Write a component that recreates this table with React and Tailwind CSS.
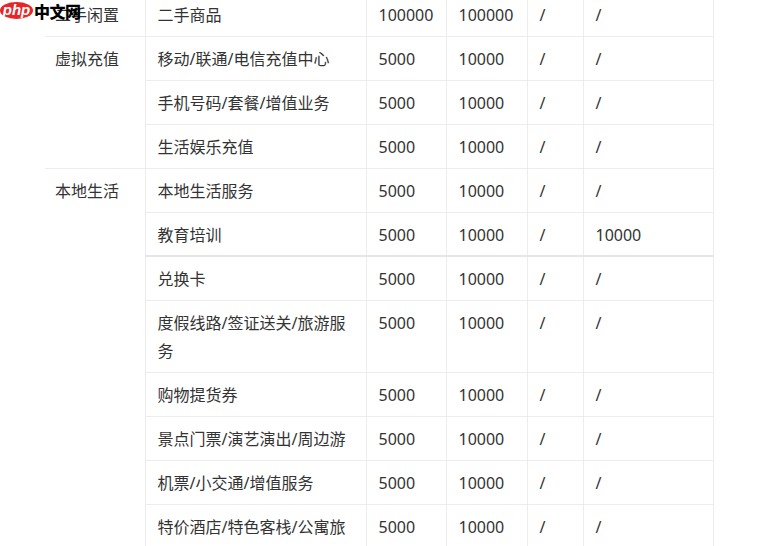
import React from "react";

const font = { fontFamily: '"Noto Sans", "Noto Sans CJK SC", sans-serif' };

const rows = [
  { group: "二手闲置", span: 1, name: "二手商品", a: "100000", b: "100000", c: "/", d: "/" },
  { group: "虚拟充值", span: 3, name: "移动/联通/电信充值中心", a: "5000", b: "10000", c: "/", d: "/" },
  { name: "手机号码/套餐/增值业务", a: "5000", b: "10000", c: "/", d: "/" },
  { name: "生活娱乐充值", a: "5000", b: "10000", c: "/", d: "/" },
  { group: "本地生活", span: 8, name: "本地生活服务", a: "5000", b: "10000", c: "/", d: "/" },
  { name: "教育培训", a: "5000", b: "10000", c: "/", d: "10000", thick: true },
  { name: "兑换卡", a: "5000", b: "10000", c: "/", d: "/" },
  { name: "度假线路/签证送关/旅游服务", a: "5000", b: "10000", c: "/", d: "/" },
  { name: "购物提货券", a: "5000", b: "10000", c: "/", d: "/" },
  { name: "景点门票/演艺演出/周边游", a: "5000", b: "10000", c: "/", d: "/" },
  { name: "机票/小交通/增值服务", a: "5000", b: "10000", c: "/", d: "/" },
  { name: "特价酒店/特色客栈/公寓旅宿", a: "5000", b: "10000", c: "/", d: "/" },
];

export default function App() {
  return (
    <div className="relative w-[757px] h-[546px] overflow-hidden bg-white text-[#333] text-[16px] leading-[28px]" style={font}>
      <div className="-mt-[7px] pl-[45px]">
        <table className="table-fixed border-collapse w-[668px]">
          <colgroup>
            <col className="w-[100px]" />
            <col className="w-[221px]" />
            <col className="w-[80px]" />
            <col className="w-[81px]" />
            <col className="w-[56px]" />
            <col className="w-[130px]" />
          </colgroup>
          <tbody>
            {rows.map((r, i) => {
              const bb = r.thick ? "border-b-2 border-b-[#e6e6e6]" : "border-b border-b-[#ececec]";
              const pb = r.thick ? "pb-[6px]" : "pb-[7px]";
              const cell = `align-top pt-[8px] ${pb} pl-[12px] pr-[12px] border-r border-r-[#ececec] ${bb}`;
              return (
                <tr key={i}>
                  {r.group && (
                    <td rowSpan={r.span} className="align-top pt-[8px] pb-[7px] pl-[10px] pr-[8px] border-r border-r-[#ececec] border-b border-b-[#ececec]">
                      {r.group}
                    </td>
                  )}
                  <td className={cell}>{r.name}</td>
                  <td className={cell}>{r.a}</td>
                  <td className={cell}>{r.b}</td>
                  <td className={cell}>{r.c}</td>
                  <td className={cell}>{r.d}</td>
                </tr>
              );
            })}
          </tbody>
        </table>
      </div>
      <div className="absolute left-0 top-[2px] flex items-center">
        <div className="w-[33px] h-[17px] rounded-[50%] bg-[#e8262a] flex items-center justify-center">
          <span className="text-white italic font-bold text-[15px] leading-none -mt-[3px]" style={{ fontFamily: '"Liberation Sans", sans-serif' }}>php</span>
        </div>
        <span className="ml-[1px] text-black font-black text-[16px] leading-none tracking-[-0.5px]" style={{ fontFamily: '"Noto Sans CJK SC", sans-serif' }}>中文网</span>
      </div>
    </div>
  );
}
